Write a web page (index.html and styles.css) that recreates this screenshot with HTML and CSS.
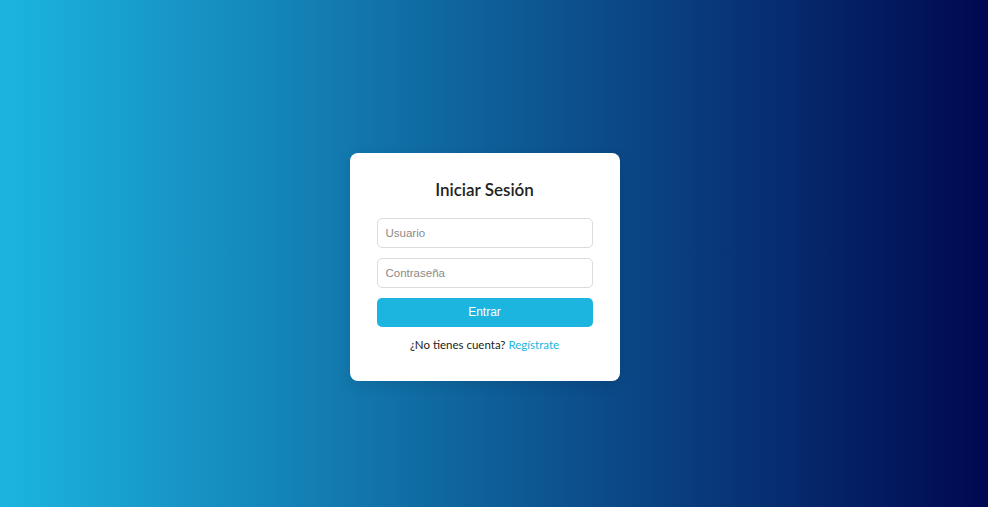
FILE: index.html
```html
<!DOCTYPE html>
<html lang="es">
<head>
<meta charset="utf-8">
<title>Iniciar Sesión</title>
<link rel="stylesheet" href="styles.css">
</head>
<body>
<main class="page">
  <form class="card">
    <h1 class="title">Iniciar Sesión</h1>
    <input class="field" type="text" placeholder="Usuario">
    <input class="field" type="password" placeholder="Contraseña">
    <button class="btn" type="button">Entrar</button>
    <p class="foot">¿No tienes cuenta? <a class="link" href="#">Regístrate</a></p>
  </form>
</main>
</body>
</html>
```
FILE: styles.css
```css
html, body {
  margin: 0;
  padding: 0;
  height: 100%;
}
body {
  background: linear-gradient(to right, #1cb5e0, #000851);
  font-family: "Lato", "Noto Sans", sans-serif;
}
.page {
  height: 100%;
  display: flex;
  align-items: center;
  justify-content: center;
}
.card {
  width: 216px;
  margin: 26px 19px 0 0;
  background: #fff;
  border-radius: 8px;
  padding: 26px 27px 29px;
  display: flex;
  flex-direction: column;
  gap: 10px;
  box-shadow: 0 4px 14px rgba(0, 0, 0, 0.1);
}
.title {
  margin: 0 0 7px;
  text-align: center;
  font-size: 17px;
  line-height: 22px;
  font-weight: 600;
  color: #222;
}
.field {
  box-sizing: border-box;
  height: 30px;
  width: 100%;
  border: 1px solid #dcdcdc;
  border-radius: 5px;
  padding: 0 8px;
  font-family: "Liberation Sans", Arial, sans-serif;
  font-size: 11.5px;
  color: #333;
  outline: none;
}
.field::placeholder {
  color: #8a8a8a;
}
.btn {
  height: 29px;
  border: none;
  border-radius: 5px;
  background: #1cb5e0;
  color: #fff;
  font-family: "Liberation Sans", Arial, sans-serif;
  font-size: 12px;
  cursor: pointer;
}
.foot {
  margin: 1px 0 0;
  text-align: center;
  font-size: 11.5px;
  line-height: 14px;
  color: #222;
}
.link {
  color: #1cb5e0;
  text-decoration: none;
}
```
